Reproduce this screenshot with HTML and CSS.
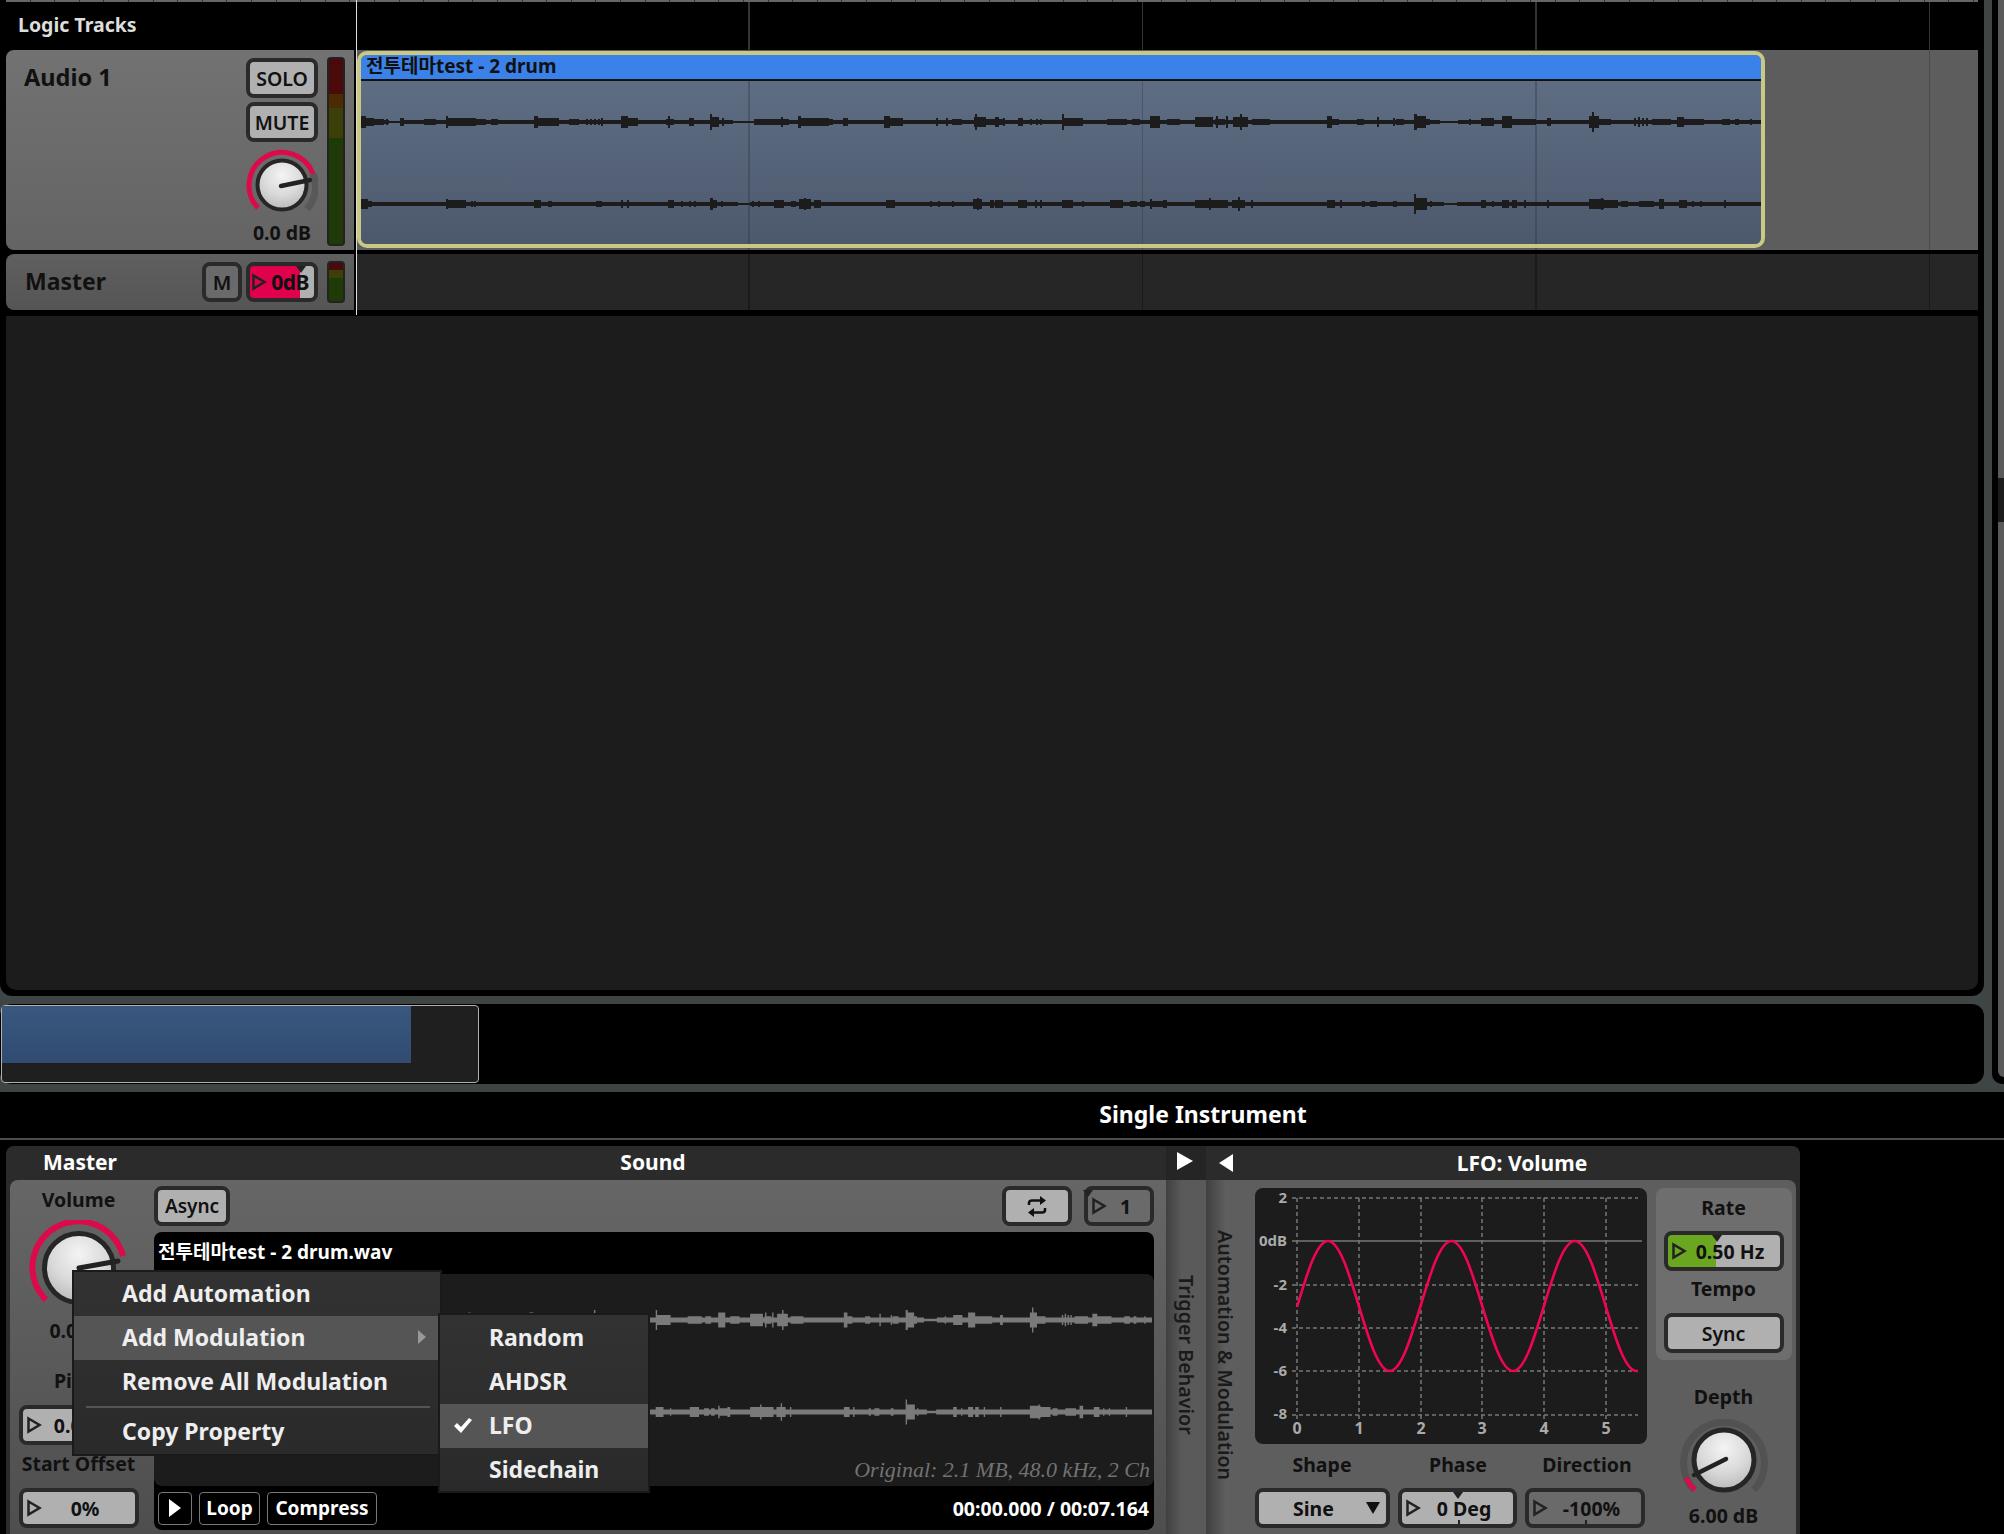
FILE: index.html
```html
<!DOCTYPE html>
<html lang="en">
<head>
  <meta charset="UTF-8">
  <title>Logic Tracks</title>
  <link rel="stylesheet" href="styles.css">
</head>
<body>
  <svg class="defs" width="0" height="0">
    <defs>
      <radialGradient id="knobFace" cx="50%" cy="30%" r="75%">
        <stop offset="0" stop-color="#f4f4f4"/>
        <stop offset="0.55" stop-color="#d9d9d9"/>
        <stop offset="1" stop-color="#b5b5b5"/>
      </radialGradient>
      <symbol id="tri" viewBox="0 0 16 18"><path d="M2.5 2.5 L13.5 9 L2.5 15.5 Z" fill="none" stroke="currentColor" stroke-width="2.5"/></symbol>
      <symbol id="waveTop" viewBox="361 -12 1400 24" preserveAspectRatio="none">
        <path d="M361-1H1761v2H361zM361-2H389v4H361zM400-2H733v4H400zM754-2H1440v4H754zM1458-2H1761v4H1458z"/>
        <path d="M360-6h6v12h-6zM366-4h8v8h-8zM374-3h10v6h-10zM386-3h2v6h-2zM400-4h4v8h-4zM424-3h12v6h-12zM446-6h2v12h-2zM448-4h28v8h-28zM476-3h10v6h-10zM491-3h7v6h-7zM534-6h4v12h-4zM538-4h21v8h-21zM569-3h10v6h-10zM586-3h2v6h-2zM590-3h2v6h-2zM594-3h2v6h-2zM598-3h2v6h-2zM601-4h2v8h-2zM621-6h7v12h-7zM628-4h10v8h-10zM666-3h8v6h-8zM668-6h2v12h-2zM689-4h5v8h-5zM710-8h2v16h-2zM712-5h7v10h-7zM722-4h2v8h-2zM754-3h35v6h-35zM781-5h2v10h-2zM798-6h3v12h-3zM801-4h28v8h-28zM829-3h4v6h-4zM843-4h5v8h-5z"/>
        <path d="M884-6h6v12h-6zM890-4h13v8h-13zM936-4h2v8h-2zM946-4h2v8h-2zM952-3h10v6h-10zM974-5h12v10h-12zM975-8h2v16h-2zM986-3h17v6h-17zM995-5h4v10h-4zM1003-4h2v8h-2zM1018-4h5v8h-5zM1030-3h2v6h-2zM1036-3h2v6h-2zM1040-3h2v6h-2zM1062-8h2v16h-2zM1063-4h20v8h-20zM1107-3h20v6h-20zM1132-3h8v6h-8zM1150-6h10v12h-10zM1167-3h13v6h-13zM1195-5h18v10h-18zM1216-6h2v12h-2zM1215-3h10v6h-10zM1226-6h2v12h-2zM1233-5h15v10h-15zM1240-8h2v16h-2zM1252-3h18v6h-18zM1327-6h5v12h-5zM1332-3h7v6h-7z"/>
        <path d="M1357-3h7v6h-7zM1377-5h2v10h-2zM1393-4h2v8h-2zM1396-3h8v6h-8zM1414-8h3v16h-3zM1417-6h9v12h-9zM1426-3h4v6h-4zM1469-3h2v6h-2zM1481-4h13v8h-13zM1502-6h10v12h-10zM1512-3h24v6h-24zM1547-4h4v8h-4zM1589-6h10v12h-10zM1592-10h2v20h-2zM1599-3h12v6h-12zM1634-4h2v8h-2zM1638-5h2v10h-2zM1642-4h2v8h-2zM1646-4h2v8h-2zM1652-3h19v6h-19zM1677-5h7v10h-7zM1684-3h20v6h-20zM1722-3h6v6h-6zM1728-3h2v6h-2zM1735-3h4v6h-4zM1750-3h2v6h-2z"/>
      </symbol>
      <symbol id="waveBottom" viewBox="361 -12 1400 24" preserveAspectRatio="none">
        <path d="M361-1H1761v2H361zM361-2H738v4H361zM750-2H1444v4H750zM1457-2H1761v4H1457z"/>
        <path d="M360-5h8v10h-8zM368-3h4v6h-4zM446-5h2v10h-2zM448-4h18v8h-18zM471-3h2v6h-2zM474-3h2v6h-2zM534-4h7v8h-7zM548-3h4v6h-4zM596-3h6v6h-6zM621-4h2v8h-2zM627-4h2v8h-2zM668-4h6v8h-6zM681-3h2v6h-2zM689-3h2v6h-2zM694-3h2v6h-2zM710-6h3v12h-3zM713-4h4v8h-4zM721-3h2v6h-2zM752-3h2v6h-2zM758-3h2v6h-2zM774-4h10v8h-10zM791-3h5v6h-5zM799-5h12v10h-12zM804-6h2v12h-2zM814-4h7v8h-7z"/>
        <path d="M886-4h9v8h-9zM930-3h2v6h-2zM938-3h2v6h-2zM952-3h2v6h-2zM973-5h9v10h-9zM977-6h2v12h-2zM990-4h4v8h-4zM995-4h8v8h-8zM1018-4h9v8h-9zM1035-4h2v8h-2zM1040-4h2v8h-2zM1062-4h11v8h-11zM1082-3h2v6h-2zM1110-4h13v8h-13zM1130-3h7v6h-7zM1140-3h5v6h-5zM1150-5h2v10h-2zM1152-3h12v6h-12zM1163-4h4v8h-4zM1195-4h25v8h-25zM1200-4h28v8h-28zM1209-6h2v12h-2zM1232-4h13v8h-13zM1238-7h2v14h-2zM1251-4h2v8h-2zM1327-4h8v8h-8zM1340-4h2v8h-2z"/>
        <path d="M1362-3h3v6h-3zM1370-3h7v6h-7zM1393-3h4v6h-4zM1414-10h2v20h-2zM1416-6h11v12h-11zM1430-3h2v6h-2zM1481-4h5v8h-5zM1492-3h2v6h-2zM1502-4h7v8h-7zM1512-4h5v8h-5zM1524-4h2v8h-2zM1547-4h2v8h-2zM1589-5h15v10h-15zM1601-6h2v12h-2zM1604-4h14v8h-14zM1621-3h7v6h-7zM1639-3h15v6h-15zM1659-5h5v10h-5zM1679-4h8v8h-8zM1692-3h2v6h-2zM1700-3h2v6h-2zM1724-4h2v8h-2z"/>
      </symbol>
    </defs>
  </svg>

  <div class="app">
    <div class="upper">
      <div class="workspace">
        <section class="arrange">
          <div class="ruler"></div>
          <div class="track-head-row">
            <div class="track-head-title">Logic Tracks</div>
            <div class="timeline timeline-head"></div>
          </div>

          <div class="track track-audio">
            <div class="track-panel track-panel-audio">
              <div class="track-name">Audio 1</div>
              <div class="track-controls">
                <button class="btn btn-track">SOLO</button>
                <button class="btn btn-track">MUTE</button>
                <svg class="knob-small" viewBox="-36 -36 72 72">
                  <path d="M31 -11 A33 33 0 0 1 25 24" fill="none" stroke="#585858" stroke-width="7"/>
                  <path d="M-24 23 A33 33 0 1 1 31 -11" fill="none" stroke="#dc0a4a" stroke-width="5"/>
                  <circle r="24.5" fill="url(#knobFace)" stroke="#262626" stroke-width="4"/>
                  <path d="M-1 1 L28 -5" stroke="#222" stroke-width="4.5" stroke-linecap="round"/>
                </svg>
                <div class="track-value">0.0 dB</div>
              </div>
              <div class="meter meter-tall"></div>
            </div>
            <div class="timeline timeline-audio">
              <div class="clip">
                <div class="clip-title">전투테마test - 2 drum</div>
                <div class="clip-body">
                  <svg class="clip-wave"><use href="#waveTop"/></svg>
                  <svg class="clip-wave"><use href="#waveBottom"/></svg>
                </div>
              </div>
            </div>
          </div>

          <div class="track track-master">
            <div class="track-panel track-panel-master">
              <div class="track-name track-name-master">Master</div>
              <button class="btn btn-m">M</button>
              <div class="param param-db">
                <svg class="tri"><use href="#tri"/></svg>
                <span class="param-text">0dB</span>
                <i class="notch notch-db"></i>
              </div>
              <div class="meter meter-short"></div>
            </div>
            <div class="timeline timeline-master"></div>
          </div>

          <div class="arrange-empty"></div>
          <div class="playhead"></div>
        </section>

        <section class="overview">
          <div class="overview-box"><div class="overview-fill"></div></div>
        </section>
      </div>
      <div class="scroll-col">
        <div class="scroll-bar"><div class="scroll-thumb"></div></div>
      </div>
    </div>

    <div class="lower">
      <div class="lower-title">Single Instrument</div>
      <div class="editor">
        <div class="sound-mod">
          <div class="mod-head">
            <div class="mod-head-master">Master</div>
            <div class="mod-head-sound">Sound</div>
          </div>
          <div class="sound-body">
            <div class="master-col">
              <div class="col-label">Volume</div>
              <svg class="knob-big" viewBox="-50 -48 100 96">
                <path d="M-33 32 A46 46 0 1 1 44 -12" fill="none" stroke="#dc0a4a" stroke-width="6"/>
                <circle r="34.5" fill="url(#knobFace)" stroke="#262626" stroke-width="5"/>
                <path d="M0 0 L39 -7" stroke="#222" stroke-width="5" stroke-linecap="round"/>
              </svg>
              <div class="col-value">0.0 dB</div>
              <div class="col-label col-label-pitch">Pitch</div>
              <div class="param param-pitch">
                <svg class="tri"><use href="#tri"/></svg>
                <span class="param-text">0.00 st</span>
              </div>
              <div class="col-label col-label-offset">Start Offset</div>
              <div class="param param-offset">
                <svg class="tri"><use href="#tri"/></svg>
                <span class="param-text">0%</span>
              </div>
            </div>

            <div class="sound-main">
              <div class="sound-tools">
                <button class="btn btn-async">Async</button>
                <button class="btn btn-repeat">
                  <svg class="repeat-icon" viewBox="0 0 20 21">
                    <path d="M2 9 V7 Q2 4.5 5 4.5 H14" fill="none" stroke="#111" stroke-width="2.6"/>
                    <path d="M13 0 L19 4.5 L13 9 Z" fill="#111"/>
                    <path d="M18 12 V14 Q18 16.5 15 16.5 H6" fill="none" stroke="#111" stroke-width="2.6"/>
                    <path d="M7 12 L1 16.5 L7 21 Z" fill="#111"/>
                  </svg>
                </button>
                <div class="param param-count">
                  <svg class="tri"><use href="#tri"/></svg>
                  <span class="param-text">1</span>
                  <i class="notch notch-left"></i>
                </div>
              </div>
              <div class="file-box">
                <div class="file-name">전투테마test - 2 drum.wav</div>
                <div class="file-wave">
                  <svg class="file-wave-line"><use href="#waveTop"/></svg>
                  <svg class="file-wave-line"><use href="#waveBottom"/></svg>
                  <div class="file-info">Original: 2.1 MB, 48.0 kHz, 2 Ch</div>
                </div>
                <div class="transport">
                  <button class="btn-dark btn-play"><svg width="14" height="20" viewBox="0 0 14 20"><path d="M1 1 L13 10 L1 19 Z" fill="#fff"/></svg></button>
                  <button class="btn-dark btn-loop">Loop</button>
                  <button class="btn-dark btn-compress">Compress</button>
                  <div class="time">00:00.000 / 00:07.164</div>
                </div>
              </div>
            </div>
          </div>
        </div>

        <div class="side-tab">
          <div class="side-tab-head"><svg width="18" height="20" viewBox="0 0 18 20"><path d="M1 1 L17 10 L1 19 Z" fill="#fff"/></svg></div>
          <div class="side-tab-body"><span class="side-text">Trigger Behavior</span></div>
        </div>

        <div class="lfo-mod">
          <div class="lfo-head">
            <svg class="lfo-back" width="16" height="20" viewBox="0 0 16 20"><path d="M15 1 L1 10 L15 19 Z" fill="#fff"/></svg>
            <div class="lfo-title">LFO: Volume</div>
          </div>
          <div class="lfo-body">
            <div class="lfo-side"><span class="side-text">Automation &amp; Modulation</span></div>
            <div class="lfo-center">
              <svg class="lfo-graph" viewBox="1255 1188 392 256">
                <g class="grid-lines">
                  <path d="M1292 1198H1638M1292 1285H1638M1292 1328H1638M1292 1371H1638M1292 1415H1638"/>
                  <path d="M1297 1198V1420M1359 1198V1420M1421 1198V1420M1482 1198V1420M1544 1198V1420M1606 1198V1420"/>
                </g>
                <path d="M1292 1241H1642" stroke="#777" stroke-width="1.5"/>
                <path class="lfo-curve" d="M1297 1307C1307.1 1273.2 1316.8 1241 1328 1241c22.5 0 39.2 130 61.7 130c22.5 0 39.2-130 61.7-130c22.5 0 39.2 130 61.7 130c22.5 0 39.2-130 61.7-130c22.5 0 39.2 130 61.7 130h1.5"/>
                <g class="graph-y">
                  <text x="1287" y="1203">2</text>
                  <text x="1287" y="1246">0dB</text>
                  <text x="1287" y="1290">-2</text>
                  <text x="1287" y="1333">-4</text>
                  <text x="1287" y="1376">-6</text>
                  <text x="1287" y="1419">-8</text>
                </g>
                <g class="graph-x">
                  <text x="1297" y="1434">0</text>
                  <text x="1359" y="1434">1</text>
                  <text x="1421" y="1434">2</text>
                  <text x="1482" y="1434">3</text>
                  <text x="1544" y="1434">4</text>
                  <text x="1606" y="1434">5</text>
                </g>
              </svg>
              <div class="lfo-labels">
                <div class="lfo-label lfo-label-shape">Shape</div>
                <div class="lfo-label lfo-label-phase">Phase</div>
                <div class="lfo-label lfo-label-dir">Direction</div>
              </div>
              <div class="lfo-controls">
                <div class="param param-shape">
                  <span class="param-text">Sine</span>
                  <svg width="14" height="14" viewBox="0 0 14 14"><path d="M0 1 H14 L7 13 Z" fill="#111"/></svg>
                </div>
                <div class="param param-phase">
                  <svg class="tri"><use href="#tri"/></svg>
                  <span class="param-text">0 Deg</span>
                  <i class="notch notch-center"></i>
                  <i class="tick"></i>
                </div>
                <div class="param param-dir">
                  <svg class="tri"><use href="#tri"/></svg>
                  <span class="param-text">-100%</span>
                  <i class="tick"></i>
                </div>
              </div>
            </div>
            <div class="lfo-right">
              <div class="rate-box">
                <div class="col-label">Rate</div>
                <div class="param param-rate">
                  <svg class="tri"><use href="#tri"/></svg>
                  <span class="param-text">0.50 Hz</span>
                  <i class="notch notch-rate"></i>
                </div>
                <div class="col-label col-label-tempo">Tempo</div>
                <button class="btn btn-sync">Sync</button>
              </div>
              <div class="col-label col-label-depth">Depth</div>
              <svg class="knob-depth" viewBox="-44 -44 88 88">
                <path d="M-30 30 A40.5 40.5 0 1 1 30 30" fill="none" stroke="#525252" stroke-width="7"/>
                <path d="M-38 18 A42 42 0 0 0 -29 30" fill="none" stroke="#dc0a4a" stroke-width="5"/>
                <circle r="30" fill="url(#knobFace)" stroke="#262626" stroke-width="5"/>
                <path d="M-30 15 L2 -1" stroke="#222" stroke-width="4.5" stroke-linecap="round"/>
              </svg>
              <div class="depth-value">6.00 dB</div>
            </div>
          </div>
        </div>
      </div>
    </div>

    <div class="menu">
      <div class="menu-item">Add Automation</div>
      <div class="menu-item menu-item-on">Add Modulation<svg class="menu-arrow" width="8" height="14" viewBox="0 0 8 14"><path d="M0 0 L8 7 L0 14 Z" fill="#999"/></svg></div>
      <div class="menu-item">Remove All Modulation</div>
      <div class="menu-sep"></div>
      <div class="menu-item">Copy Property</div>
      <div class="submenu">
        <div class="sub-item">Random</div>
        <div class="sub-item">AHDSR</div>
        <div class="sub-item sub-item-on"><svg class="check" width="20" height="17" viewBox="0 0 20 17"><path d="M1 9 L4 6 L8 10 L16 1 L19 3 L8 16 Z" fill="#fff"/></svg>LFO</div>
        <div class="sub-item">Sidechain</div>
      </div>
    </div>
  </div>
</body>
</html>
```

FILE: styles.css
```css
:root {
  --gutter: #3f4444;
  --panel-dark: #1c1c1c;
  --head-dark: #2b2b2b;
  --outline: #2a2a2a;
  --ink: #111;
}

* {
  box-sizing: border-box;
}

html, body {
  margin: 0;
  background: #000;
}

body {
  font-family: "Noto Sans", "Noto Sans CJK KR", sans-serif;
  font-weight: 700;
  color: #fff;
}

.defs {
  position: absolute;
}

.app {
  position: relative;
  width: 2004px;
  height: 1534px;
  overflow: hidden;
  display: flex;
  flex-direction: column;
}

.upper {
  display: flex;
  height: 1092px;
  padding-bottom: 8px;
  background: var(--gutter);
}

.workspace {
  width: 1984px;
  display: flex;
  flex-direction: column;
  gap: 8px;
}

.scroll-col {
  width: 12px;
  height: 1084px;
  margin-left: 8px;
  padding-left: 6px;
  background: #000;
  border-radius: 0 0 0 10px;
}

.scroll-bar {
  height: 1077px;
  padding-top: 478px;
  background: #5a5a5a;
  border-radius: 0 0 0 8px;
}

.scroll-thumb {
  height: 44px;
  background: #1c1c1c;
}

/* arrangement */

.arrange {
  position: relative;
  height: 996px;
  padding: 0 6px 6px 0;
  background: #000;
  border-radius: 0 0 12px 12px;
  display: flex;
  flex-direction: column;
}

.ruler {
  height: 2px;
  margin-left: 6px;
  background: repeating-linear-gradient(90deg, #666 0 23.6px, #333 23.6px 24.6px);
}

.track-head-row {
  display: flex;
  height: 48px;
}

.track-head-title {
  width: 356px;
  padding-left: 18px;
  font-size: 19.5px;
  line-height: 46px;
  color: #ddd;
}

.timeline {
  flex: 1;
  --grid: linear-gradient(90deg,
    transparent 392.5px, var(--line) 392.5px 394px,
    transparent 394px 786px, var(--line) 786px 787.5px,
    transparent 787.5px 1179.5px, var(--line) 1179.5px 1181px,
    transparent 1181px 1572.5px, var(--line) 1572.5px 1574px,
    transparent 1574px);
}

.timeline-head {
  --line: #333;
  background: var(--grid);
}

.track {
  display: flex;
  padding-left: 6px;
}

.track-audio {
  height: 200px;
}

.track-master {
  height: 56px;
  margin-top: 4px;
}

.track-panel {
  width: 348px;
  margin-right: 2px;
  display: flex;
  border-radius: 8px 0 0 8px;
  color: var(--ink);
}

.track-panel-audio {
  padding: 8px 9px 0 18px;
  background: linear-gradient(#727272, #646464);
}

.track-panel-master {
  align-items: center;
  padding: 0 9px 0 19px;
  background: linear-gradient(#5f5f5f, #555);
}

.track-name {
  flex: 1;
  font-size: 23.5px;
  line-height: 38px;
}

.track-name-master {
  font-size: 23px;
  margin-top: -2px;
}

.track-controls {
  width: 72px;
  display: flex;
  flex-direction: column;
  gap: 4px;
  margin-right: 9px;
}

.btn {
  display: flex;
  align-items: center;
  justify-content: center;
  margin: 0;
  padding: 0;
  height: 40px;
  font: inherit;
  color: var(--ink);
  background: #b0b0b0;
  border: 4px solid var(--outline);
  border-radius: 8px;
}

.btn-track {
  font-size: 19.5px;
  font-weight: 600;
}

.knob-small {
  width: 72px;
  height: 72px;
  margin-top: 3px;
}

.track-value {
  margin-top: -4px;
  text-align: center;
  font-size: 19.5px;
  line-height: 24px;
}

.meter {
  width: 18px;
  border: 2px solid #222;
  border-radius: 4px;
}

.meter-tall {
  height: 189px;
  margin-top: -1px;
  background: linear-gradient(#4a0a0c 0 35px, #4b2a06 35px 49px, #3c4008 49px 79px, #1f3a06 79px);
}

.meter-short {
  height: 42px;
  background: linear-gradient(#4a0a0c 0 7px, #3c4008 7px 15px, #1f3a06 15px);
}

.timeline-audio {
  --line: #4a4a4a;
  padding: 1px 0 2px 1px;
  background: var(--grid), #5d5d5d;
}

.timeline-master {
  --line: #1a1a1a;
  background: var(--grid), #262626;
}

.clip {
  width: 1408px;
  height: 197px;
  display: flex;
  flex-direction: column;
  border: 4px solid #c9c985;
  border-radius: 10px;
  overflow: hidden;
  color: var(--ink);
}

.clip-title {
  flex: none;
  height: 26px;
  padding-left: 5px;
  font-size: 19px;
  line-height: 23px;
  background: #3a82ea;
  border-bottom: 2px solid #111;
}

.clip-body {
  --line: rgba(40, 50, 65, 0.35);
  flex: 1;
  padding-top: 29px;
  display: flex;
  flex-direction: column;
  gap: 57.5px;
  background:
    linear-gradient(90deg,
      transparent 387.5px, var(--line) 387.5px 389px,
      transparent 389px 781px, var(--line) 781px 782.5px,
      transparent 782.5px 1174.5px, var(--line) 1174.5px 1176px,
      transparent 1176px),
    linear-gradient(#5f6d83, #4c596d);
}

.clip-wave {
  display: block;
  flex: none;
  width: 1400px;
  height: 24px;
  fill: #1c1c1c;
}

.btn-m {
  width: 40px;
  font-size: 20px;
  font-weight: 600;
  margin-right: 4px;
  background: #6a6a6a;
}

.param {
  position: relative;
  display: flex;
  align-items: center;
  height: 40px;
  padding: 0 6px 0 3px;
  color: var(--ink);
  background: #b0b0b0;
  border: 4px solid var(--outline);
  border-radius: 8px;
  font-size: 19.5px;
}

.param-text {
  flex: 1;
  text-align: center;
  white-space: nowrap;
}

.tri {
  flex: none;
  width: 16px;
  height: 18px;
  color: #222;
}

.param-db {
  width: 72px;
  padding: 0 0 0 1px;
  margin-right: 9px;
  font-size: 21px;
  background: linear-gradient(90deg, #e0004d 0 50px, #b0b0b0 50px);
}

.param-db .param-text {
  margin-left: -1px;
  letter-spacing: -0.5px;
}

.notch {
  position: absolute;
  top: 0;
  width: 0;
  height: 0;
  border-left: 5px solid transparent;
  border-right: 5px solid transparent;
  border-top: 7px solid #222;
}

.notch-db {
  left: 46px;
}

.notch-left {
  left: -5px;
}

.notch-center {
  left: 50%;
  margin-left: -5px;
}

.notch-rate {
  left: 44px;
}

.tick {
  position: absolute;
  bottom: 0;
  left: 50%;
  width: 2px;
  height: 4px;
  background: #222;
}

.arrange-empty {
  flex: 1;
  margin: 6px 0 0 6px;
  background: var(--panel-dark);
  border-radius: 0 0 10px 10px;
}

.playhead {
  position: absolute;
  top: 0;
  left: 356px;
  width: 1px;
  height: 315px;
  background: #ddd;
}

/* overview strip */

.overview {
  height: 80px;
  padding: 1px 0 0 1px;
  background: #000;
  border-radius: 12px;
}

.overview-box {
  width: 478px;
  height: 78px;
  background: #1f1f1f;
  border: 1.5px solid #b0b0b0;
  border-radius: 4px;
}

.overview-fill {
  width: 409px;
  height: 56.5px;
  background: linear-gradient(#39587f, #314b72);
}

/* editor */

.lower {
  flex: 1;
  display: flex;
  flex-direction: column;
}

.lower-title {
  flex: none;
  height: 46px;
  padding-left: 402px;
  border-bottom: 2px solid #4a4e4e;
  text-align: center;
  font-size: 23px;
  line-height: 44px;
  box-sizing: content-box;
}

.editor {
  flex: 1;
  width: 1794px;
  margin: 6px 0 0 6px;
  display: flex;
  background: var(--head-dark);
  border-radius: 8px 8px 0 0;
  overflow: hidden;
}

.sound-mod {
  width: 1160px;
  display: flex;
  flex-direction: column;
}

.mod-head {
  flex: none;
  height: 34px;
  display: flex;
  font-size: 21px;
  line-height: 33px;
}

.mod-head-master {
  width: 144px;
  padding-left: 37px;
}

.mod-head-sound {
  flex: 1;
  padding-right: 10px;
  text-align: center;
}

.sound-body {
  flex: 1;
  margin-left: 4px;
  padding: 6px 12px 4px 0;
  display: flex;
  background: linear-gradient(#666, #4e4e4e);
  border-radius: 8px 0 0 0;
  color: var(--ink);
}

.master-col {
  width: 144px;
  margin-top: -6px;
  padding: 0 17px 0 10px;
  display: flex;
  flex-direction: column;
  align-items: center;
}

.col-label {
  font-size: 19.5px;
  line-height: 30px;
  text-align: center;
  color: var(--ink);
}

.master-col > .col-label:first-child {
  margin-top: 5px;
}

.knob-big {
  flex: none;
  width: 100px;
  height: 96px;
  margin-top: 5px;
}

.col-value {
  font-size: 19.5px;
  line-height: 30px;
}

.col-label-pitch {
  margin-top: 20px;
}

.param-pitch,
.param-offset {
  width: 120px;
  flex: none;
  margin-top: 9px;
}

.col-label-offset {
  margin-top: 4px;
  white-space: nowrap;
}

.sound-main {
  flex: 1;
  display: flex;
  flex-direction: column;
  gap: 6px;
}

.sound-tools {
  display: flex;
  gap: 12px;
}

.btn-async {
  width: 76px;
  font-size: 19px;
  font-weight: 600;
  margin-right: auto;
}

.btn-repeat {
  width: 70px;
}

.repeat-icon {
  width: 20px;
  height: 21px;
}

.param-count {
  width: 70px;
  background: #6a6a6a;
}

.file-box {
  flex: 1;
  display: flex;
  flex-direction: column;
  background: #000;
  border-radius: 8px;
  color: #fff;
}

.file-name {
  flex: none;
  height: 42px;
  padding-left: 4px;
  font-size: 19px;
  line-height: 40px;
}

.file-wave {
  flex: none;
  height: 212px;
  padding: 31px 0 0 4px;
  display: flex;
  flex-direction: column;
  gap: 62px;
  background: var(--panel-dark);
  border-radius: 8px;
}

.file-wave-line {
  flex: none;
  display: block;
  width: 994px;
  height: 30px;
  fill: #7a7a7a;
}

.file-info {
  margin-top: -34px;
  padding-right: 4px;
  text-align: right;
  font-family: "Liberation Serif", serif;
  font-style: italic;
  font-weight: 400;
  font-size: 22px;
  line-height: 30px;
  color: #727272;
}

.transport {
  flex: 1;
  display: flex;
  align-items: center;
  gap: 7px;
  padding: 0 5px 0 4px;
}

.btn-dark {
  display: flex;
  align-items: center;
  justify-content: center;
  height: 33px;
  margin: 0;
  padding: 0;
  font: inherit;
  font-size: 19px;
  color: #fff;
  background: #000;
  border: 1px solid #777;
  border-radius: 4px;
}

.btn-play {
  width: 34px;
}

.btn-loop {
  width: 61px;
}

.btn-compress {
  width: 110px;
}

.time {
  margin-left: auto;
  font-size: 19.5px;
}

.side-tab {
  width: 40px;
  display: flex;
  flex-direction: column;
}

.side-tab-head {
  flex: none;
  height: 34px;
  padding: 5px 0 0 10px;
  background: #252525;
}

.side-tab-body {
  flex: 1;
  display: flex;
  align-items: center;
  justify-content: center;
  padding-bottom: 4px;
  background: linear-gradient(90deg, #404040, #5a5a5a 40%);
  color: #1a1a1a;
}

.side-text {
  writing-mode: vertical-rl;
  font-size: 19.7px;
  font-weight: 600;
  white-space: nowrap;
  color: #1a1a1a;
}

.lfo-mod {
  flex: 1;
  display: flex;
  flex-direction: column;
}

.lfo-head {
  position: relative;
  flex: none;
  height: 34px;
  display: flex;
  align-items: center;
  padding-left: 12px;
}

.lfo-back {
  flex: none;
}

.lfo-title {
  flex: 1;
  padding-left: 10px;
  margin-top: -1px;
  text-align: center;
  font-size: 21px;
}

.lfo-body {
  flex: 1;
  margin-right: 4px;
  padding-top: 8px;
  display: flex;
  background: #5e5e5e;
  border-radius: 0 8px 0 0;
}

.lfo-side {
  width: 49px;
  display: flex;
  align-items: center;
  justify-content: center;
  margin-top: -8px;
  padding: 0 10px 4px 0;
  background: linear-gradient(90deg, #404040, #5e5e5e 40%);
}

.lfo-center {
  width: 392px;
}

.lfo-graph {
  display: block;
  width: 392px;
  height: 256px;
  background: var(--panel-dark);
  border-radius: 8px;
}

.grid-lines path {
  fill: none;
  stroke: #777;
  stroke-width: 1.5;
  stroke-dasharray: 4 3;
}

.lfo-curve {
  fill: none;
  stroke: #f2054f;
  stroke-width: 2.6;
}

.graph-y text {
  text-anchor: end;
  fill: #aaa;
  font-size: 15px;
}

.graph-x text {
  text-anchor: middle;
  fill: #aaa;
  font-size: 16px;
}

.lfo-labels {
  display: flex;
  height: 44px;
  line-height: 41px;
  font-size: 19.5px;
  color: var(--ink);
  text-align: center;
}

.lfo-label-shape {
  width: 134px;
}

.lfo-label-phase {
  width: 138px;
}

.lfo-label-dir {
  flex: 1;
}

.lfo-controls {
  display: flex;
  gap: 8px;
}

.param-shape {
  width: 135px;
  padding: 0 6px 0 8px;
}

.param-shape .param-text {
  padding-right: 6px;
}

.param-phase {
  width: 119px;
}

.param-dir {
  width: 120px;
  background: #6a6a6a;
}

.lfo-right {
  width: 136px;
  margin-left: 8.5px;
  display: flex;
  flex-direction: column;
  align-items: center;
}

.rate-box {
  width: 136px;
  height: 172px;
  padding: 5px 8px 0;
  background: #6e6e6e;
  border-radius: 8px;
}

.param-rate {
  margin-top: 8px;
  background: linear-gradient(90deg, #6aa620 0 48px, #b0b0b0 48px);
}

.col-label-tempo {
  margin: 3px 0 9px;
}

.btn-sync {
  width: 100%;
  font-size: 19.5px;
  font-weight: 600;
}

.col-label-depth {
  margin-top: 22px;
}

.knob-depth {
  flex: none;
  width: 88px;
  height: 88px;
  margin-top: 4px;
}

.depth-value {
  font-size: 19.5px;
  line-height: 23px;
  color: var(--ink);
}

/* context menu */

.menu {
  position: absolute;
  left: 72px;
  top: 1270px;
  width: 370px;
  height: 186px;
  background: linear-gradient(#323232, #2a2a2a);
  border: 2px solid #1a1a1a;
}

.menu-item {
  display: flex;
  align-items: center;
  height: 44px;
  padding: 0 0 3px 48px;
  font-size: 23px;
  color: #eee;
}

.menu-item-on {
  background: #555;
}

.menu-arrow {
  margin-left: auto;
  margin-right: 14px;
}

.menu-sep {
  height: 2px;
  margin: 2px 10px 2px 12px;
  background: #555;
}

.submenu {
  position: absolute;
  left: 364px;
  top: 41px;
  width: 212px;
  height: 180px;
  padding-top: 1px;
  background: linear-gradient(#323232, #2a2a2a);
  border: 2px solid #1a1a1a;
}

.sub-item {
  position: relative;
  display: flex;
  align-items: center;
  height: 44px;
  padding: 0 0 3px 49px;
  font-size: 23px;
  color: #eee;
}

.sub-item-on {
  background: #555;
}

.check {
  position: absolute;
  left: 13px;
  top: 13px;
}
```
